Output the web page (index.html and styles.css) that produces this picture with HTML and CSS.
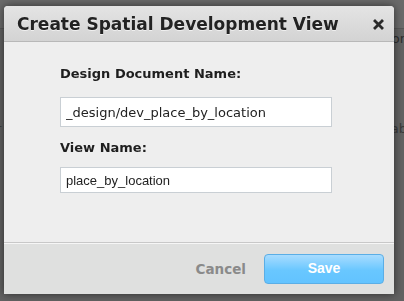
FILE: index.html
```html
<!DOCTYPE html>
<html lang="en">
<head>
  <meta charset="UTF-8" />
  <title>Create Spatial Development View</title>
  <link rel="stylesheet" href="styles.css">
</head>
<body>
  <div class="page">
    <div class="page-bar"><span>on</span></div>
    <div class="page-row"><span>r</span><span>ab</span></div>
  </div>

  <div class="backdrop">
    <div class="dialog">
      <div class="dialog-header">
        <h1>Create Spatial Development View</h1>
        <span class="close">
          <svg width="11" height="11" viewBox="0 0 11 11">
            <path d="M2 2 L9 9 M9 2 L2 9" stroke="#2a2a2a" stroke-width="2.8" stroke-linecap="square"/>
          </svg>
        </span>
      </div>

      <div class="dialog-body">
        <label for="ddoc" class="label-first">Design Document Name:</label>
        <input type="text" id="ddoc" class="input-ddoc" value="_design/dev_place_by_location" />

        <label for="vname" class="label-second">View Name:</label>
        <input type="text" id="vname" class="input-view" value="place_by_location" />
      </div>

      <div class="dialog-footer">
        <a class="cancel">Cancel</a>
        <button class="save">Save</button>
      </div>
    </div>
  </div>
</body>
</html>
```

FILE: styles.css
```css
body {
  margin: 0;
  width: 404px;
  height: 301px;
  overflow: hidden;
  background-color: #626262;
  font-family: 'DejaVu Sans', Verdana, sans-serif;
}

.page {
  color: #2e2e2e;
  font-size: 13px;
}

.page-bar {
  height: 28px;
  border-bottom: 1px solid #575757;
  background-color: #6a6a6a;
  display: flex;
  justify-content: flex-end;
  align-items: flex-end;
}

.page-bar span {
  margin-right: -4px;
  margin-bottom: -20px;
  line-height: 18px;
}

.page-row {
  margin-top: 92px;
  height: 18px;
  display: flex;
  justify-content: space-between;
  color: #3a3a3a;
}

.page-row span:first-child {
  margin-left: -4px;
}

.page-row span:last-child {
  margin-right: -3px;
}

.backdrop {
  position: fixed;
  top: 0;
  left: 0;
  width: 100%;
  height: 100%;
}

.dialog {
  position: absolute;
  top: 6px;
  left: 4px;
  width: 390px;
  height: 288px;
  display: flex;
  flex-direction: column;
  background-color: #eeeeee;
  border-radius: 4px 4px 0 0;
  box-shadow: 0 0 8px rgba(0, 0, 0, 0.55);
}

.dialog-header {
  height: 35px;
  display: flex;
  align-items: center;
  justify-content: space-between;
  padding: 0 10px 0 13px;
  background: linear-gradient(#e4e4e4, #d3d3d3);
  border-bottom: 1px solid #b8b8b8;
  border-radius: 4px 4px 0 0;
}

h1 {
  margin: 0;
  font-size: 17px;
  font-weight: bold;
  color: #222222;
  text-shadow: 0 1px 0 rgba(255, 255, 255, 0.6);
}

.close {
  display: flex;
  margin-top: 1px;
}

.dialog-body {
  flex: 1;
  padding: 24px 0 0 56px;
}

label {
  display: block;
  font-size: 13px;
  font-weight: bold;
  line-height: 16px;
  color: #1e1e1e;
}

.label-first {
  margin-bottom: 15px;
}

.label-second {
  margin-top: 13px;
  margin-bottom: 11px;
}

input[type="text"] {
  display: block;
  width: 272px;
  box-sizing: border-box;
  margin: 0;
  padding: 0 5px;
  border: 1px solid #c9cfd4;
  background-color: #ffffff;
  color: #222222;
  font-size: 13px;
  outline: none;
}

.input-ddoc {
  height: 30px;
  font-family: 'DejaVu Sans', Verdana, sans-serif;
  font-size: 13.4px;
}

.input-view {
  height: 26px;
  font-family: 'Liberation Sans', Arial, sans-serif;
}

.dialog-footer {
  height: 51px;
  display: flex;
  align-items: center;
  justify-content: flex-end;
  gap: 18px;
  padding-right: 10px;
  background-color: #dfe0df;
  border-top: 1px solid #c8c8c8;
  box-shadow: inset 0 1px 0 #f6f6f6;
}

.cancel {
  font-size: 13.5px;
  font-weight: bold;
  color: #8a8a8a;
}

.save {
  width: 120px;
  height: 30px;
  margin-top: 1px;
  border: 1px solid #5aaee6;
  border-radius: 4px;
  background: linear-gradient(#a8dcff, #69c7ff 55%, #62c3ff);
  color: #ffffff;
  font-family: 'Liberation Sans', Arial, sans-serif;
  font-size: 14px;
  font-weight: bold;
  padding: 0 0 3px;
}
```
